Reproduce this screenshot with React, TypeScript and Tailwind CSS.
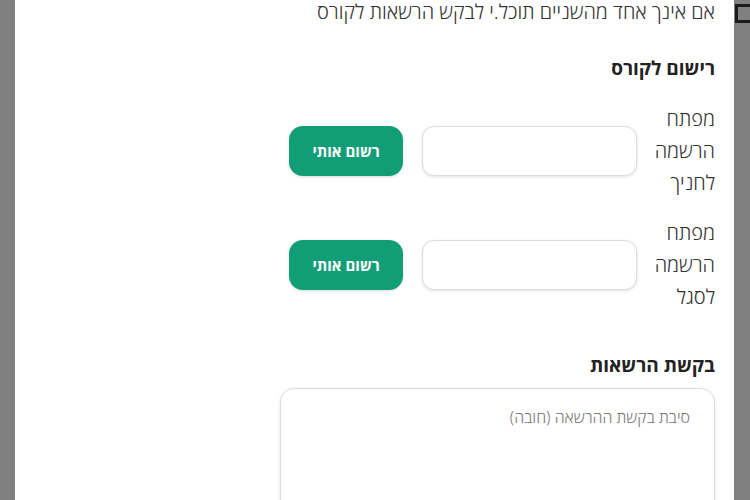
const font = { fontFamily: '"Noto Sans", "Open Sans", "DejaVu Sans", sans-serif' };

function KeyRow({ label }: { label: string[] }) {
  return (
    <div className="flex items-center gap-[18px]">
      <div className="w-[60px] text-[20px] leading-[32px] font-light text-[#333]">
        {label.map((l) => (
          <div key={l}>{l}</div>
        ))}
      </div>
      <div className="flex items-center gap-[19px]">
        <input
          type="text"
          className="w-[215px] h-[50px] rounded-xl border border-[#dcdcdc] bg-white shadow-[0_1px_3px_rgba(0,0,0,0.12)] px-3 outline-none"
        />
        <button className="w-[114px] h-[50px] rounded-[14px] bg-[#119e76] text-white font-bold text-[15px] shadow-[0_1px_3px_rgba(0,0,0,0.15)]">
          רשום אותי
        </button>
      </div>
    </div>
  );
}

export default function App() {
  return (
    <div dir="rtl" style={font} className="relative h-[500px] w-full overflow-hidden bg-[#808080]">
      {/* page text behind the overlay */}
      <div className="absolute left-[735px] top-[4px] w-[20px] h-[19px] border-l-[3px] border-t-[3px] border-b-[3px] border-[#1c1c1c]" />

      <div className="absolute left-[15px] top-0 w-[719px] h-[500px] bg-white">
        <div className="mr-[19px] w-[440px] flex flex-col">
          <p className="text-[20px] leading-[24px] font-light text-[#333]">
            אם אינך אחד מהשניים תוכל.י לבקש הרשאות לקורס
          </p>

          <h2 className="mt-[32px] text-[19px] leading-[24px] font-bold text-[#222]">רישום לקורס</h2>

          <div className="mt-[23px]">
            <KeyRow label={['מפתח', 'הרשמה', 'לחניך']} />
          </div>
          <div className="mt-[18px]">
            <KeyRow label={['מפתח', 'הרשמה', 'לסגל']} />
          </div>

          <h2 className="mt-[40px] text-[19px] leading-[24px] font-bold text-[#222]">בקשת הרשאות</h2>

          <textarea
            placeholder="סיבת בקשת ההרשאה (חובה)"
            className="mt-[11px] w-[435px] h-[160px] rounded-[14px] border border-[#dcdcdc] shadow-[0_1px_3px_rgba(0,0,0,0.12)] pt-[17px] pr-[24px] pl-4 text-[16px] leading-[22px] font-light placeholder:text-[#777] outline-none resize-none"
          />
        </div>
      </div>
    </div>
  );
}
